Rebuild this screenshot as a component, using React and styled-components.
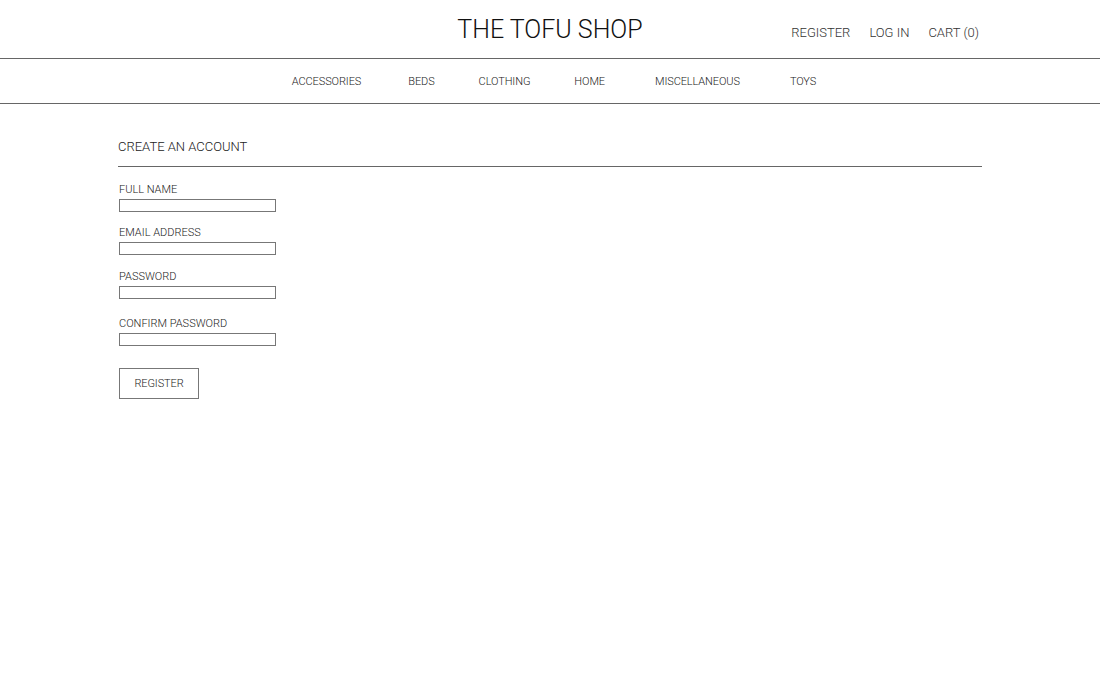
import React from "react";
import styled, { createGlobalStyle } from "styled-components";

const Global = createGlobalStyle`
  html, body { margin: 0; padding: 0; background: #fff; }
  body { font-family: Roboto, "Liberation Sans", sans-serif; color: #222; }
  * { box-sizing: border-box; }
`;

const Header = styled.header`
  height: 59px;
  border-bottom: 1px solid #666;
  display: grid;
  grid-template-columns: 1fr auto 1fr;
  align-items: center;
`;

const Logo = styled.h1`
  grid-column: 2;
  margin: 0;
  font-size: 25px;
  font-weight: 300;
  color: #111;
`;

const Account = styled.nav`
  grid-column: 3;
  justify-self: end;
  margin-right: 121px;
  display: flex;
  gap: 19px;
  padding-top: 6px;
`;

const AccountLink = styled.a`
  font-size: 13px;
  font-weight: 300;
  color: #333;
  text-decoration: none;
`;

const Nav = styled.nav`
  height: 45px;
  border-bottom: 1px solid #666;
  display: flex;
  justify-content: center;
  align-items: center;
  padding-left: 8px;
  padding-top: 1px;
`;

const NavLink = styled.a`
  font-size: 11px;
  font-weight: 300;
  color: #222;
  text-decoration: none;
  letter-spacing: -0.1px;
  margin-left: ${(p) => p.$space}px;
`;

const Main = styled.main`
  width: 864px;
  margin: 0 auto;
  padding-top: 35px;
`;

const Title = styled.h2`
  margin: 0;
  font-size: 13px;
  font-weight: 300;
  padding-bottom: 12px;
  border-bottom: 1px solid #666;
  color: #222;
`;

const Form = styled.form`
  display: flex;
  flex-direction: column;
  padding-left: 1px;
  padding-top: 17px;
`;

const Field = styled.div`
  display: flex;
  flex-direction: column;
  margin-bottom: ${(p) => p.$gap}px;
`;

const Label = styled.label`
  font-size: 11px;
  font-weight: 300;
  color: #222;
  line-height: 12px;
  margin-bottom: 3px;
`;

const Input = styled.input`
  width: 157px;
  height: 13px;
  border: 1px solid #777;
  padding: 0;
  margin: 0;
  outline: none;
`;

const Button = styled.button`
  align-self: flex-start;
  width: 80px;
  height: 31px;
  background: #fff;
  border: 1px solid #777;
  font-family: Roboto, "Liberation Sans", sans-serif;
  font-size: 11px;
  font-weight: 300;
  letter-spacing: -0.1px;
  color: #222;
  padding: 0;
  margin-top: 5px;
`;

const navItems = [
  { name: "ACCESSORIES", space: 0 },
  { name: "BEDS", space: 47 },
  { name: "CLOTHING", space: 44 },
  { name: "HOME", space: 44 },
  { name: "MISCELLANEOUS", space: 50 },
  { name: "TOYS", space: 50 },
];

const fields = [
  { label: "FULL NAME", type: "text", gap: 15 },
  { label: "EMAIL ADDRESS", type: "email", gap: 16 },
  { label: "PASSWORD", type: "password", gap: 19 },
  { label: "CONFIRM PASSWORD", type: "password", gap: 17 },
];

export default function App() {
  return (
    <>
      <Global />
      <Header>
        <Logo>THE TOFU SHOP</Logo>
        <Account>
          <AccountLink href="#">REGISTER</AccountLink>
          <AccountLink href="#">LOG IN</AccountLink>
          <AccountLink href="#">CART (0)</AccountLink>
        </Account>
      </Header>
      <Nav>
        {navItems.map((n) => (
          <NavLink href="#" key={n.name} $space={n.space}>{n.name}</NavLink>
        ))}
      </Nav>
      <Main>
        <Title>CREATE AN ACCOUNT</Title>
        <Form onSubmit={(e) => e.preventDefault()}>
          {fields.map((f) => (
            <Field key={f.label} $gap={f.gap}>
              <Label>{f.label}</Label>
              <Input type={f.type} />
            </Field>
          ))}
          <Button type="submit">REGISTER</Button>
        </Form>
      </Main>
    </>
  );
}
